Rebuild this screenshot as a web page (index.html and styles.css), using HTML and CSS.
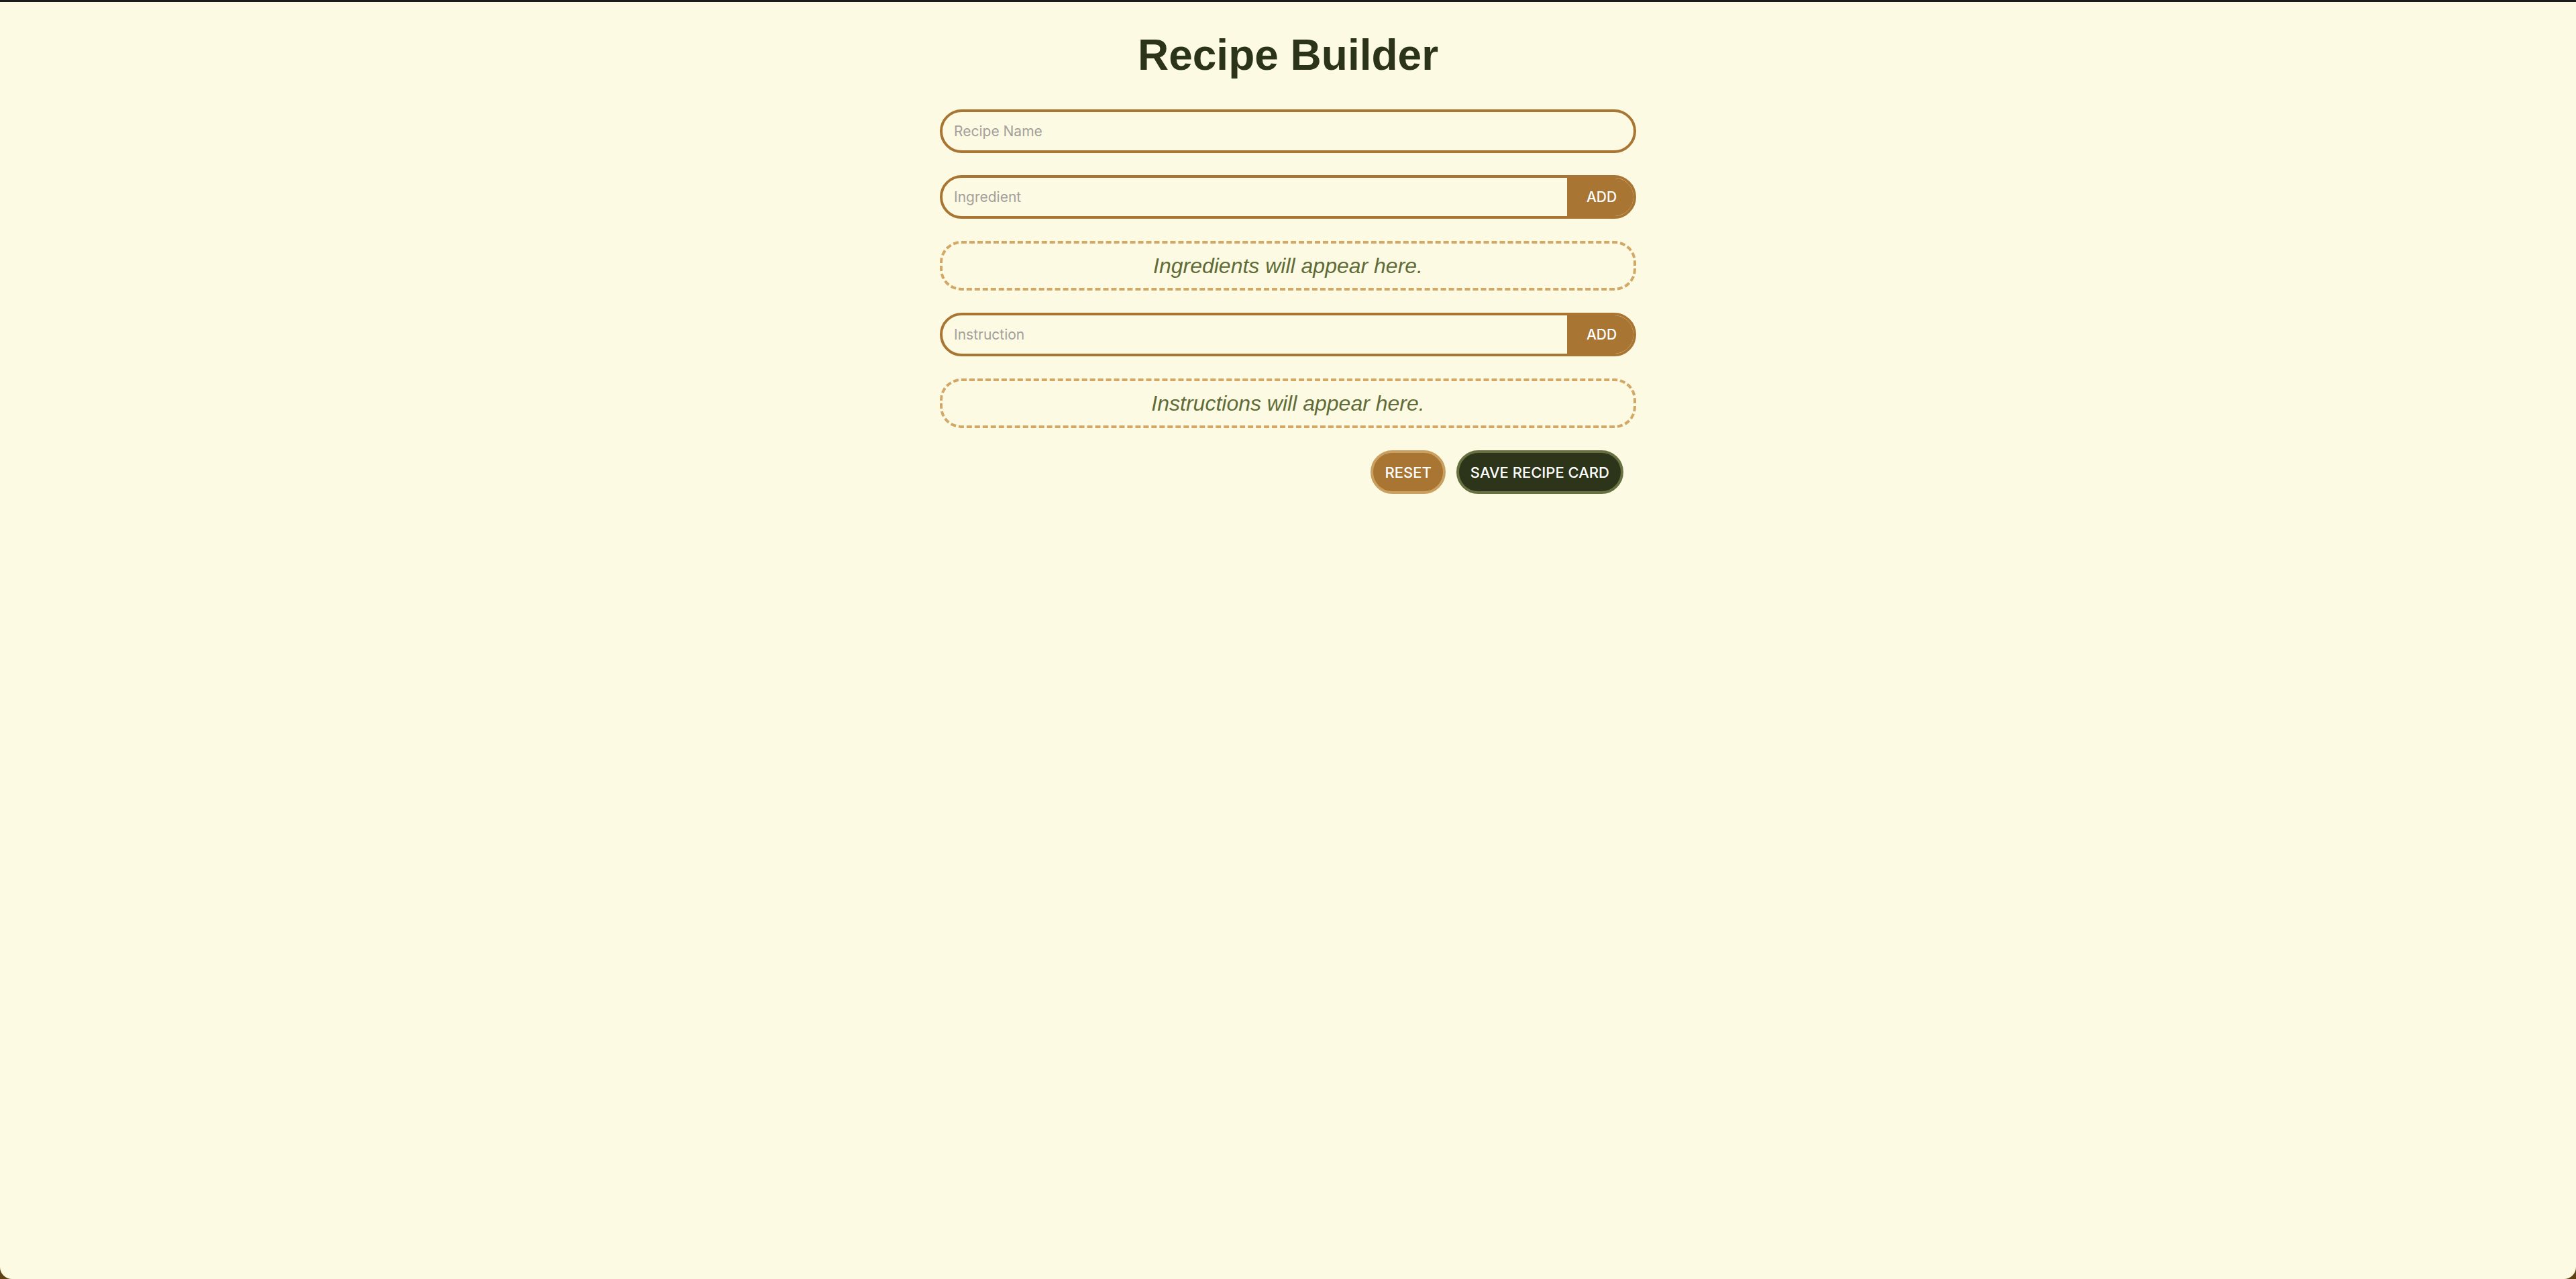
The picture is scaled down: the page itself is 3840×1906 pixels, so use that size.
FILE: index.html
```html
<!DOCTYPE html>
<html lang="en">
<head>
<meta charset="utf-8">
<title>Recipe Builder</title>
<link rel="stylesheet" href="styles.css">
</head>
<body>
<main class="app">
  <h1 class="title">Recipe Builder</h1>
  <form class="builder" onsubmit="return false;">
    <div class="field">
      <input class="text-input" type="text" placeholder="Recipe Name">
    </div>
    <div class="field field-add">
      <input class="text-input" type="text" placeholder="Ingredient">
      <button class="add-btn" type="button">ADD</button>
    </div>
    <div class="list-box">Ingredients will appear here.</div>
    <div class="field field-add">
      <input class="text-input" type="text" placeholder="Instruction">
      <button class="add-btn" type="button">ADD</button>
    </div>
    <div class="list-box">Instructions will appear here.</div>
    <div class="actions">
      <button class="btn btn-reset" type="button">RESET</button>
      <button class="btn btn-save" type="button">SAVE RECIPE CARD</button>
    </div>
  </form>
</main>
</body>
</html>
```

FILE: styles.css
```css
html {
  background: #5e4214;
  height: 100%;
}

body {
  margin: 0;
  min-height: 100vh;
  box-sizing: border-box;
  background: #fdfae3;
  border-top: 3px solid #1c1c1a;
  border-radius: 0 0 18px 18px;
  font-family: "Liberation Sans", Arial, sans-serif;
}

.app {
  width: 1038px;
  margin: 0 auto;
  padding-top: 42px;
}

.title {
  margin: 0 0 44px;
  font-family: "Liberation Sans", Arial, sans-serif;
  font-weight: 700;
  font-size: 64px;
  line-height: 74px;
  text-align: center;
  color: #2b3319;
}

.builder {
  display: flex;
  flex-direction: column;
  gap: 33px;
}

.field {
  display: flex;
  height: 65px;
  box-sizing: border-box;
  border: 4px solid #a87533;
  border-radius: 40px;
  overflow: hidden;
  background: #fdfae3;
}

.text-input {
  flex: 1;
  min-width: 0;
  border: 0;
  outline: none;
  background: transparent;
  padding: 0 17px;
  font-family: "Inter", "Noto Sans", sans-serif;
  font-size: 21px;
  color: #2b3319;
}

.text-input::placeholder {
  color: #a3a09b;
}

.add-btn {
  width: 99px;
  border: 0;
  background: #a87533;
  color: #ffffff;
  font-family: "Inter", "Noto Sans", sans-serif;
  font-weight: 500;
  font-size: 21px;
  padding: 0 0 0 4px;
  cursor: pointer;
}

.list-box {
  height: 74px;
  box-sizing: border-box;
  border: 4px dashed #d3a866;
  border-radius: 32px;
  display: flex;
  align-items: center;
  justify-content: center;
  font-family: "Liberation Sans", Arial, sans-serif;
  font-style: italic;
  font-size: 32px;
  color: #606c38;
}

.actions {
  display: flex;
  justify-content: flex-end;
  gap: 16px;
  padding-right: 19px;
}

.btn {
  height: 65px;
  box-sizing: border-box;
  border-radius: 40px;
  border: 4px solid;
  padding: 0 17px;
  font-family: "Inter", "Noto Sans", sans-serif;
  font-weight: 500;
  font-size: 22px;
  color: #ffffff;
  cursor: pointer;
}

.btn-reset {
  background: #a87533;
  border-color: #c9a060;
}

.btn-save {
  background: #2c3419;
  border-color: #667040;
}
```
